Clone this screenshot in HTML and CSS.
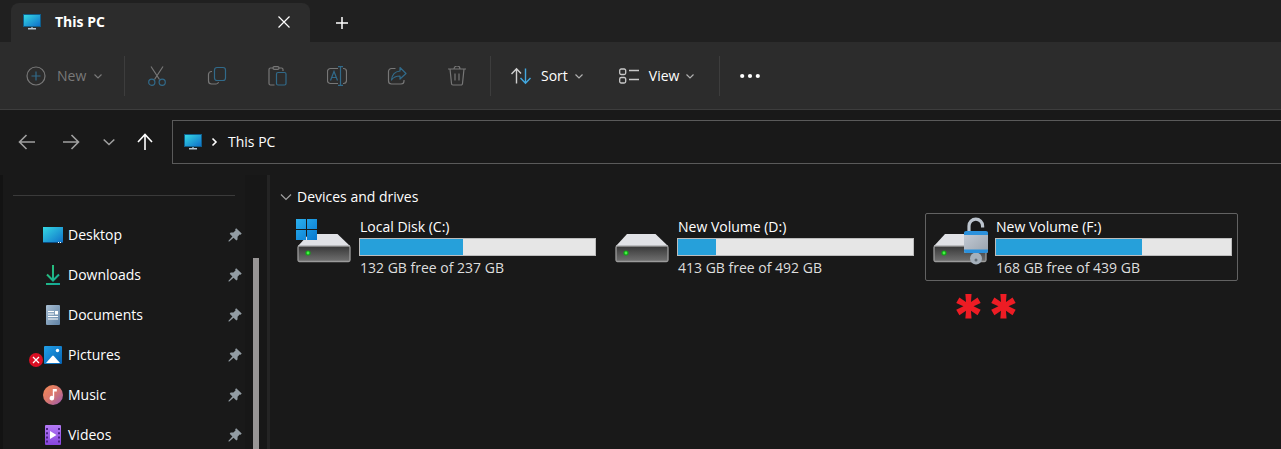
FILE: index.html
```html
<!DOCTYPE html>
<html lang="en">
<head>
<meta charset="utf-8">
<meta name="viewport" content="width=device-width, initial-scale=1">
<title>This PC</title>
<link rel="stylesheet" href="styles.css">
</head>
<body>
<svg class="defs" aria-hidden="true">
  <defs>
    <linearGradient id="screen" x1="0" y1="0" x2="1" y2="1"><stop offset="0" stop-color="#35d8e4"/><stop offset="1" stop-color="#0f6fc8"/></linearGradient>
    <linearGradient id="green" x1="0" y1="0" x2="1" y2="1"><stop offset="0" stop-color="#2fc673"/><stop offset="1" stop-color="#12a79c"/></linearGradient>
    <linearGradient id="paper" x1="0" y1="0" x2="1" y2="1"><stop offset="0" stop-color="#a9bfd3"/><stop offset="1" stop-color="#5f82a5"/></linearGradient>
    <linearGradient id="photo" x1="0" y1="0" x2="1" y2="1"><stop offset="0" stop-color="#22a0e8"/><stop offset="1" stop-color="#0663b4"/></linearGradient>
    <linearGradient id="music" x1="0" y1="0" x2="1" y2="1"><stop offset="0" stop-color="#f48a54"/><stop offset=".5" stop-color="#d9776f"/><stop offset="1" stop-color="#9557b5"/></linearGradient>
    <linearGradient id="video" x1="0" y1="0" x2="0" y2="1"><stop offset="0" stop-color="#b47af5"/><stop offset="1" stop-color="#8745dd"/></linearGradient>
    <linearGradient id="front" x1="0" y1="0" x2="0" y2="1"><stop offset="0" stop-color="#373737"/><stop offset="1" stop-color="#717171"/></linearGradient>
    <linearGradient id="win" x1="0" y1="0" x2="1" y2="1"><stop offset="0" stop-color="#2bb0ee"/><stop offset="1" stop-color="#0777cf"/></linearGradient>
    <linearGradient id="steel" x1="0" y1="0" x2="1" y2="1"><stop offset="0" stop-color="#c5ccd6"/><stop offset="1" stop-color="#98a2ad"/></linearGradient>
    <symbol id="i-pc" viewBox="0 0 18 16">
      <rect width="18" height="13" fill="#0f5e8c"/><rect x="1" y="1" width="16" height="11" fill="url(#screen)"/>
      <path d="M8 13h2v1H8z" fill="#7f929f"/><path d="M5 14h8v1.500H5z" fill="#b9c7d1"/>
    </symbol>
    <symbol id="i-chev" viewBox="0 0 10 10"><path d="M1.500 3.500 5 7l3.500-3.500" fill="none" stroke="currentColor" stroke-width="1.200"/></symbol>
    <symbol id="i-pin" viewBox="0 0 14 14">
      <path d="M8.200.300 13.700 5.600 12.600 6.700 11.600 6.500 9.600 8.700 9.500 11.500 8.400 12.500 5.500 9.700 1.300 13.500H.5V12.700L4.400 8.500 1.700 5.700 2.700 4.600 5.400 4.500 7.500 2.400 7.200 1.300z" fill="#929ca3"/>
    </symbol>
    <symbol id="i-drive" viewBox="0 0 58 56">
      <path d="M14 18h28.500L55 30H3z" fill="#e1e2e6"/>
      <rect x="3" y="30" width="52" height="15.500" rx="1.500" fill="url(#front)" stroke="#9b9b9b" stroke-width="1.300"/>
      <path d="M3.500 29.500h51" stroke="#bcbdc0"/>
      <circle cx="13" cy="37" r="2.600" fill="#12a516"/><circle cx="13" cy="37" r="1.400" fill="#46f046"/>
    </symbol>
  </defs>
</svg>

<header class="titlebar">
  <div class="tab">
    <svg class="pc" aria-hidden="true"><use href="#i-pc"/></svg>
    <span class="tab-title">This PC</span>
    <button class="plain tab-close" aria-label="Close tab"><svg width="12" height="12" viewBox="0 0 12 12"><path d="M.5.5l11 11M11.500.5l-11 11" stroke="currentColor" stroke-width="1.200"/></svg></button>
  </div>
  <button class="plain new-tab" aria-label="New tab"><svg width="12" height="12" viewBox="0 0 12 12"><path d="M0 6h12M6 0v12" stroke="currentColor" stroke-width="1.500"/></svg></button>
</header>

<div class="toolbar" role="toolbar" aria-label="Commands">
  <button class="plain cmd cmd-new" disabled>
    <svg width="20" height="20" viewBox="0 0 20 20" fill="none"><circle cx="10" cy="10" r="9" stroke="#777" stroke-width="1.200"/><path d="M10 5.500v9M5.500 10h9" stroke="#316a8a" stroke-width="1.200"/></svg>
    <span>New</span><svg class="chev"><use href="#i-chev"/></svg>
  </button>
  <div class="icons">
    <button class="plain" disabled aria-label="Cut"><svg width="20" height="20" viewBox="0 0 20 20" fill="none" stroke-width="1.200"><path d="M4 .5l8.500 13M16 .5l-8.500 13" stroke="#777"/><circle cx="4.800" cy="16.200" r="3.100" stroke="#316a8a"/><circle cx="15.200" cy="16.200" r="3.100" stroke="#316a8a"/></svg></button>
    <button class="plain" disabled aria-label="Copy"><svg width="20" height="20" viewBox="0 0 20 20" fill="none" stroke-width="1.200"><path d="M5 5.500h-.5a3 3 0 0 0-3 3V15a3 3 0 0 0 3 3H9a2.500 2.500 0 0 0 2.500-2" stroke="#777"/><rect x="7.500" y="1.500" width="11" height="13" rx="2.500" stroke="#316a8a"/></svg></button>
    <button class="plain" disabled aria-label="Paste"><svg width="20" height="20" viewBox="0 0 20 20" fill="none" stroke-width="1.200"><path d="M7.500 19h-4A1.500 1.500 0 0 1 2 17.500V3.500A1.500 1.500 0 0 1 3.500 2H6M12 2h2.500A1.500 1.500 0 0 1 16 3.500V5" stroke="#777"/><rect x="6" y=".7" width="6" height="2.600" rx="1.300" stroke="#777"/><rect x="9.500" y="6.500" width="9.500" height="12.500" rx="1.500" stroke="#316a8a"/></svg></button>
    <button class="plain" disabled aria-label="Rename"><svg width="20" height="20" viewBox="0 0 20 20" fill="none" stroke-width="1.200"><path d="M11 2.500H3.500a3 3 0 0 0-3 3v9a3 3 0 0 0 3 3H11M16 2.500h.5a3 3 0 0 1 3 3v9a3 3 0 0 1-3 3H16" stroke="#777"/><path d="M13.500.5v19M11 .6h5M11 19.400h5M3.500 14.500 7 5.500l3.500 9M4.800 11.500h4.500" stroke="#316a8a"/></svg></button>
    <button class="plain" disabled aria-label="Share"><svg width="20" height="20" viewBox="0 0 20 20" fill="none" stroke-width="1.200"><path d="M8.500 2.500H4.500a3 3 0 0 0-3 3V15a3 3 0 0 0 3 3H14a3 3 0 0 0 3-3v-1" stroke="#777"/><path d="M13 1.500 19 7.500l-6 5.500V10c-4 0-6.500 1-8.500 4 .5-5 3.500-8.500 8.500-9z" stroke="#316a8a" stroke-linejoin="round"/></svg></button>
    <button class="plain" disabled aria-label="Delete"><svg width="20" height="20" viewBox="0 0 20 20" fill="none" stroke="#777" stroke-width="1.200"><path d="M1 3h18M7 3a3 3 0 0 1 6 0M3 3l1.500 14.500A1.500 1.500 0 0 0 6 19h8a1.500 1.500 0 0 0 1.500-1.500L17 3M8 7.500v7M12 7.500v7"/></svg></button>
  </div>
  <div class="menus">
    <button class="plain cmd">
      <svg width="20" height="20" viewBox="0 0 20 20" fill="none" stroke-width="1.400"><path d="M5.500 17.500V3M.5 8l5-5.200L10 7.500" stroke="#d0d0d0"/><path d="M14.500 2.500V17M9.500 12l5 5.200 5-5.200" stroke="#42a8e0"/></svg>
      <span>Sort</span><svg class="chev"><use href="#i-chev"/></svg>
    </button>
    <button class="plain cmd">
      <svg width="20" height="20" viewBox="0 0 20 20" fill="none" stroke="#c8c8c8" stroke-width="1.300"><rect x=".7" y="3" width="6" height="5.500" rx="1.500"/><rect x=".7" y="11.500" width="6" height="5.500" rx="1.500"/><path d="M10 4.500h10M10 13.500h10"/></svg>
      <span>View</span><svg class="chev"><use href="#i-chev"/></svg>
    </button>
  </div>
  <button class="plain more" aria-label="See more"><svg width="20" height="20" viewBox="0 0 20 20" fill="currentColor"><circle cx="2.200" cy="10" r="2.100"/><circle cx="10" cy="10" r="2.100"/><circle cx="17.800" cy="10" r="2.100"/></svg></button>
</div>

<div class="navbar">
  <button class="plain nav-btn" aria-label="Back"><svg width="18" height="18" viewBox="0 0 18 18"><path d="M17 9H2M8.500 2 1.500 9l7 7"/></svg></button>
  <button class="plain nav-btn" aria-label="Forward"><svg width="18" height="18" viewBox="0 0 18 18"><path d="M1 9h15M9.500 2l7 7-7 7"/></svg></button>
  <button class="plain nav-btn recent" aria-label="Recent locations"><svg width="12" height="12" viewBox="0 0 12 12"><path d="M.7 3.500 6 8.500l5.300-5"/></svg></button>
  <button class="plain nav-btn up" aria-label="Up"><svg width="18" height="18" viewBox="0 0 18 18"><path d="M9 17V2M2 9l7-7.500L16 9"/></svg></button>
  <nav class="address" aria-label="Address">
    <svg class="pc" aria-hidden="true"><use href="#i-pc"/></svg>
    <svg class="crumb" width="8" height="10" viewBox="0 0 8 10"><path d="M2.500 1.500 6 5 2.500 8.500" fill="none" stroke="#fff" stroke-width="1.600"/></svg>
    <button class="plain">This PC</button>
  </nav>
</div>

<div class="body">
  <aside class="sidebar">
    <nav class="quick" aria-label="Quick access">
      <hr>
      <ul>
        <li><a href="#"><svg class="ico" viewBox="0 0 20 20"><path d="M0 2h20v16H0z" fill="url(#screen)"/><path d="M0 17h20v1H0z" fill="#0b4b80"/><path d="M15 17h1v1h-1zM17 17h1v1h-1z" fill="#fff"/></svg><span>Desktop</span></a><svg class="pin"><use href="#i-pin"/></svg></li>
        <li><a href="#"><svg class="ico" viewBox="0 0 20 20" fill="none" stroke="url(#green)" stroke-width="2"><path d="M10.010 0 9.990 15.500M4 9.500l6 6 6-6M3 18.990l14 .02"/></svg><span>Downloads</span></a><svg class="pin"><use href="#i-pin"/></svg></li>
        <li><a href="#"><svg class="ico" viewBox="0 0 20 20"><rect x="3" width="14" height="20" rx="1" fill="url(#paper)"/><path d="M5 6.500h6M5 9h6M5 11.500h10M5 14h10" stroke="#fff" stroke-width="1.200"/><path d="M12 6h3v3.500h-3z" fill="#fff"/></svg><span>Documents</span></a><svg class="pin"><use href="#i-pin"/></svg></li>
        <li><a href="#"><svg class="ico" viewBox="0 0 20 20"><rect x="1" y="1" width="18" height="18" rx="1" fill="url(#photo)"/><path d="M3 18 9.200 11q.8-.8 1.600 0L17 18z" fill="#fff"/><circle cx="14.500" cy="5.500" r="1.700" fill="#fff"/></svg><svg class="error" viewBox="0 0 14 14"><circle cx="7" cy="7" r="7" fill="#d90f23"/><path d="M4 4l6 6M10 4l-6 6" stroke="#fff" stroke-width="1.300"/></svg><span>Pictures</span></a><svg class="pin"><use href="#i-pin"/></svg></li>
        <li><a href="#"><svg class="ico" viewBox="0 0 20 20"><circle cx="10" cy="10" r="10" fill="url(#music)"/><path d="M9.800 4h4v2.500h-2.600V13a2.300 2.300 0 1 1-1.400-2z" fill="#fff"/></svg><span>Music</span></a><svg class="pin"><use href="#i-pin"/></svg></li>
        <li><a href="#"><svg class="ico" viewBox="0 0 20 20"><rect x="2" width="16" height="20" rx="1" fill="url(#video)"/><path d="M4 3v15M16 3v15" stroke="#4a2385" stroke-width="2" stroke-dasharray="2 2.200"/><path d="M7 6l6.500 4L7 14z" fill="#fff"/></svg><span>Videos</span></a><svg class="pin"><use href="#i-pin"/></svg></li>
      </ul>
    </nav>
    <div class="scroll"><div class="thumb"></div></div>
  </aside>

  <main class="content">
    <h2><button class="plain group"><svg width="12" height="12" viewBox="0 0 12 12"><path d="M1 3.500l5 5 5-5" fill="none" stroke="#a0a0a0" stroke-width="1.200"/></svg>Devices and drives</button></h2>
    <div class="drives">
      <article class="drive">
        <svg class="drive-icon" viewBox="0 0 58 56"><use href="#i-drive"/><path d="M1 3h10v10H1zM12 3h10v10H12zM1 14h10v10H1zM12 14h10v10H12z" fill="url(#win)"/></svg>
        <div class="info">
          <div class="name">Local Disk (C:)</div>
          <div class="bar" role="meter" aria-label="Space used on C" aria-valuemin="0" aria-valuemax="100" aria-valuenow="44"><div class="used" style="width:44%"></div></div>
          <div class="free">132 GB free of 237 GB</div>
        </div>
      </article>
      <article class="drive">
        <svg class="drive-icon" viewBox="0 0 58 56"><use href="#i-drive"/></svg>
        <div class="info">
          <div class="name">New Volume (D:)</div>
          <div class="bar" role="meter" aria-label="Space used on D" aria-valuemin="0" aria-valuemax="100" aria-valuenow="16"><div class="used" style="width:16%"></div></div>
          <div class="free">413 GB free of 492 GB</div>
        </div>
      </article>
      <article class="drive selected">
        <svg class="drive-icon" viewBox="0 0 58 56">
          <use href="#i-drive"/>
          <path d="M38 17V10a6.800 6.800 0 0 1 13.600 0V11.500" fill="none" stroke="#bcc4ce" stroke-width="3.200"/>
          <circle cx="45" cy="42.500" r="6" fill="#a5b0bb"/><circle cx="45" cy="44" r="1.500" fill="#626d77"/>
          <rect x="33" y="16" width="24" height="21" rx="1.500" fill="url(#steel)"/>
          <path d="M33 19v-2a2 2 0 0 1 2-2h20a2 2 0 0 1 2 2v2zM33 33.500h24V35a2 2 0 0 1-2 2H35a2 2 0 0 1-2-2z" fill="#2b91dc"/>
        </svg>
        <div class="info">
          <div class="name">New Volume (F:)</div>
          <div class="bar" role="meter" aria-label="Space used on F" aria-valuemin="0" aria-valuemax="100" aria-valuenow="62"><div class="used" style="width:62%"></div></div>
          <div class="free">168 GB free of 439 GB</div>
        </div>
      </article>
      <div class="mark">**</div>
    </div>
  </main>
</div>
</body>
</html>
```
FILE: styles.css
```css
* { box-sizing: border-box; }

body {
  margin: 0;
  height: 100vh;
  display: flex;
  flex-direction: column;
  overflow: hidden;
  background: #191919;
  color: #fff;
  font: 14px/20px "Open Sans", "Noto Sans", sans-serif;
}

.defs { position: absolute; width: 0; height: 0; }
svg { flex: none; display: block; }

.plain {
  display: flex;
  align-items: center;
  justify-content: center;
  padding: 0;
  border: 0;
  background: none;
  color: inherit;
  font: inherit;
}

.pc { width: 18px; height: 16px; }

/* Title bar */
.titlebar {
  flex: none;
  display: flex;
  height: 42px;
  padding: 3px 11px 0;
  background: #202020;
}
.tab {
  display: flex;
  align-items: center;
  width: 299px;
  padding: 0 10px 2px 12px;
  border-radius: 8px 8px 0 0;
  background: #2c2c2c;
}
.tab-title { flex: 1; margin-left: 14px; font-weight: 700; }
.tab-close { width: 32px; height: 32px; }
.new-tab { width: 32px; margin-left: 16px; }

/* Command bar */
.toolbar {
  flex: none;
  display: flex;
  align-items: center;
  height: 68px;
  padding-left: 26px;
  border-bottom: 1px solid #3d3d3d;
  background: #2c2c2c;
}
.cmd { gap: 10px; justify-content: flex-start; height: 40px; }
.cmd-new { gap: 11px; width: 98px; color: #797979; }
.chev { width: 10px; height: 10px; margin-left: -4px; color: #b0b0b0; }
.cmd-new .chev { color: #797979; }
.icons {
  display: flex;
  padding: 0 3px 0 2px;
  border: solid #3d3d3d;
  border-width: 0 1px;
}
.icons button { width: 60px; height: 40px; }
.icons, .menus { height: 40px; }
.menus {
  display: flex;
  gap: 35px;
  padding: 0 24px 0 20px;
  border-right: 1px solid #3d3d3d;
}
.more { width: 60px; height: 40px; }

/* Navigation bar */
.navbar {
  flex: none;
  display: flex;
  align-items: center;
  height: 65px;
  padding: 0 0 2px 5px;
}
.nav-btn { width: 44px; height: 40px; color: #a0a0a0; }
.nav-btn path { fill: none; stroke: currentColor; stroke-width: 1.6; }
.recent { width: 32px; }
.up { width: 40px; color: #fff; }
.address {
  flex: 1;
  display: flex;
  align-items: center;
  height: 44px;
  margin-left: 7px;
  padding-left: 11px;
  border: 1px solid #5a5a5a;
  border-right: 0;
}
.crumb { margin: 0 10px 0 8px; }

/* Sidebar */
.body { flex: 1; display: flex; min-height: 0; }
.sidebar {
  flex: none;
  display: flex;
  width: 270px;
  border-left: 3px solid #131313;
  border-right: 3px solid #242424;
  overflow: hidden;
}
.quick { flex: 1; padding: 20px 0 0 10px; }
.quick hr { height: 1px; margin: 0 10px 19px 0; border: 0; background: #3a3a3a; }
.quick ul { margin: 0; padding: 0; list-style: none; }
.quick li { display: flex; align-items: center; height: 40px; padding: 0 3px 0 30px; }
.quick a {
  position: relative;
  flex: 1;
  display: flex;
  align-items: center;
  gap: 5px;
  color: inherit;
  text-decoration: none;
}
.ico { width: 20px; height: 20px; }
.error { position: absolute; left: -14px; top: 8px; width: 14px; height: 14px; }
.pin { width: 14px; height: 14px; }
.scroll { width: 22px; padding: 83px 8px 0; background: #171717; }
.thumb { width: 6px; height: 100%; background: #989595; }

/* Drives */
.content { flex: 1; min-width: 0; padding: 12px 0 0 10px; }
.content h2 { margin: 0 0 6px; font: inherit; }
.group { gap: 5px; }
.drives {
  display: grid;
  grid-template-columns: repeat(auto-fill, 313px);
  column-gap: 5px;
  padding-left: 9px;
}
.drive {
  display: flex;
  gap: 6px;
  padding: 2px 5px 0;
  border: 1px solid transparent;
  border-radius: 2px;
}
.selected { border-color: #626262; }
.drive-icon { width: 58px; height: 56px; }
.info { flex: 1; }
.name { padding-left: 1px; line-height: 22px; }
.bar { height: 18px; border: 1px solid #bcbcbc; background: #e6e6e6; }
.used { height: 100%; background: #26a0da; }
.free { padding-left: 1px; line-height: 24px; color: #dedede; }
.mark {
  grid-column: 3;
  padding-left: 26px;
  color: #ed1c24;
  font: 800 60px/70px Inter, sans-serif;
}
```
